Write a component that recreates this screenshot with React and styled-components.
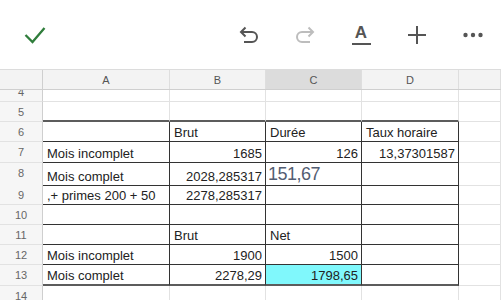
import React from 'react'
import styled, { createGlobalStyle } from 'styled-components'

const GlobalStyle = createGlobalStyle`
  body {
    margin: 0;
    background: #fff;
    font-family: "Liberation Sans", Arial, sans-serif;
  }
`

const COLS = '43px 127px 96px 96px 97px 1fr'
const LETTERS = ['A', 'B', 'C', 'D', '']

// what the sheet shows, row by row (A..D)
const rows = [
  { n: 4, h: 20 },
  { n: 5, h: 20, lid: true },
  { n: 6, h: 20, box: true, cells: ['', 'Brut', 'Durée', 'Taux horaire'] },
  { n: 7, h: 21, box: true, cells: ['Mois incomplet', '1685', '126', '13,37301587'] },
  { n: 8, h: 22, box: true, cells: ['Mois complet', '2028,285317', { text: '151,67', edit: true }, ''] },
  { n: 9, h: 20, box: true, cells: [',+ primes 200 + 50', '2278,285317', '', ''] },
  { n: 10, h: 20, box: true, cells: ['', '', '', ''] },
  { n: 11, h: 20, box: true, cells: ['', 'Brut', 'Net', ''] },
  { n: 12, h: 20, box: true, cells: ['Mois incomplet', '1900', '1500', ''] },
  { n: 13, h: 21, box: true, base: true, cells: ['Mois complet', '2278,29', { text: '1798,65', fill: '#80f8fc' }, ''] },
  { n: 14, h: 20 },
]

export default function App() {
  return (
    <Page>
      <GlobalStyle />
      <Toolbar>
        <ToolButton>
          <svg width="22" height="18" viewBox="0 0 22 18">
            <polyline points="1.5,9 8.5,16 20.5,2" fill="none" stroke="#2f7d3b" strokeWidth="2.3" />
          </svg>
        </ToolButton>
        <ToolGroup>
          <ToolButton>
            <UndoIcon color="#555" />
          </ToolButton>
          <ToolButton $flip>
            <UndoIcon color="#bdbdbd" />
          </ToolButton>
          <ToolButton>
            <FormatIcon>
              <Letter>A</Letter>
              <Bar />
            </FormatIcon>
          </ToolButton>
          <ToolButton>
            <svg width="20" height="20" viewBox="0 0 20 20">
              <path d="M10 1v18M1 10h18" stroke="#555" strokeWidth="2" />
            </svg>
          </ToolButton>
          <ToolButton>
            <svg width="20" height="6" viewBox="0 0 20 6">
              <circle cx="2.5" cy="3" r="2.2" fill="#555" />
              <circle cx="10" cy="3" r="2.2" fill="#555" />
              <circle cx="17.5" cy="3" r="2.2" fill="#555" />
            </svg>
          </ToolButton>
        </ToolGroup>
      </Toolbar>

      <HeaderRow>
        <Corner />
        {LETTERS.map((l, i) => (
          <ColHead key={i} $selected={l === 'C'}>{l}</ColHead>
        ))}
      </HeaderRow>

      <Body>
        <Rows>
          {rows.map(r => (
            <Row key={r.n} $h={r.h}>
              <RowHead>{r.n}</RowHead>
              {[0, 1, 2, 3].map(i => {
                const raw = r.cells ? r.cells[i] : ''
                const c = typeof raw === 'string' ? { text: raw } : raw
                const numeric = /^[\d,]+$/.test(c.text) && !c.edit
                return (
                  <Cell
                    key={i}
                    $boxed={r.box}
                    $lid={r.lid}
                    $base={r.base}
                    $right={numeric}
                    $fill={c.fill}
                  >
                    {c.edit ? <Editing>{c.text}</Editing> : c.text}
                  </Cell>
                )
              })}
              <Cell />
            </Row>
          ))}
        </Rows>
      </Body>
    </Page>
  )
}

function UndoIcon({ color }) {
  return (
    <svg width="20" height="18" viewBox="0 0 20 18" fill="none" stroke={color} strokeWidth="2">
      <path d="M6.5 1.5L2 6l4.5 4.5" />
      <path d="M2 6h11a5 5 0 0 1 0 10H5" />
    </svg>
  )
}

const Page = styled.div`
  width: 501px;
  height: 300px;
  overflow: hidden;
  display: flex;
  flex-direction: column;
`

const Toolbar = styled.div`
  height: 70px;
  flex: none;
  box-sizing: border-box;
  border-bottom: 1px solid #dcdcdc;
  display: flex;
  align-items: center;
  justify-content: space-between;
  padding: 0 0 0 7px;
`

const ToolGroup = styled.div`
  display: flex;
`

const ToolButton = styled.div`
  width: 56px;
  height: 40px;
  display: flex;
  align-items: center;
  justify-content: center;
  transform: ${p => (p.$flip ? 'scaleX(-1)' : 'none')};
`

const FormatIcon = styled.div`
  display: flex;
  flex-direction: column;
  align-items: center;
  margin-top: 1px;
`

const Letter = styled.span`
  font-size: 17px;
  font-weight: bold;
  line-height: 14px;
  color: #555;
`

const Bar = styled.div`
  width: 19px;
  height: 2px;
  margin-top: 3px;
  background: #555;
`

const HeaderRow = styled.div`
  flex: none;
  height: 20px;
  display: grid;
  grid-template-columns: ${COLS};
  background: #f3f3f3;
  box-sizing: border-box;
  border-bottom: 1px solid #cfcfcf;
`

const Corner = styled.div`
  border-right: 1px solid #cfcfcf;
`

const ColHead = styled.div`
  display: flex;
  align-items: center;
  justify-content: center;
  padding-top: 1px;
  font-size: 11px;
  color: #555;
  background: ${p => (p.$selected ? '#dcdcdc' : 'transparent')};
  border-right: 1px solid #dedede;
`

const Body = styled.div`
  flex: 1;
  overflow: hidden;
`

const Rows = styled.div`
  margin-top: -8px;
`

const Row = styled.div`
  display: grid;
  grid-template-columns: ${COLS};
  height: ${p => p.$h}px;
`

const RowHead = styled.div`
  display: flex;
  align-items: flex-start;
  justify-content: center;
  padding-top: 4px;
  font-size: 11px;
  line-height: 13px;
  color: #666;
  background: #f6f6f6;
  box-sizing: border-box;
  border-right: 1px solid #cfcfcf;
  border-bottom: 1px solid #e2e2e2;
`

const Cell = styled.div`
  box-sizing: border-box;
  display: flex;
  align-items: flex-end;
  justify-content: ${p => (p.$right ? 'flex-end' : 'flex-start')};
  padding: 0 3px 1px 4px;
  font-size: 13px;
  line-height: 15px;
  color: #222;
  white-space: nowrap;
  background: ${p => p.$fill || 'transparent'};
  border-right: 1px solid ${p => (p.$boxed ? '#333' : '#e2e2e2')};
  border-bottom: ${p =>
    p.$lid || p.$base ? '2px solid #5c5c5c' : p.$boxed ? '1px solid #333' : '1px solid #e2e2e2'};
`

const Editing = styled.span`
  align-self: flex-start;
  margin: 1px 0 0 -2px;
  font-size: 18px;
  line-height: 20px;
  letter-spacing: -0.5px;
  color: #535d72;
`
